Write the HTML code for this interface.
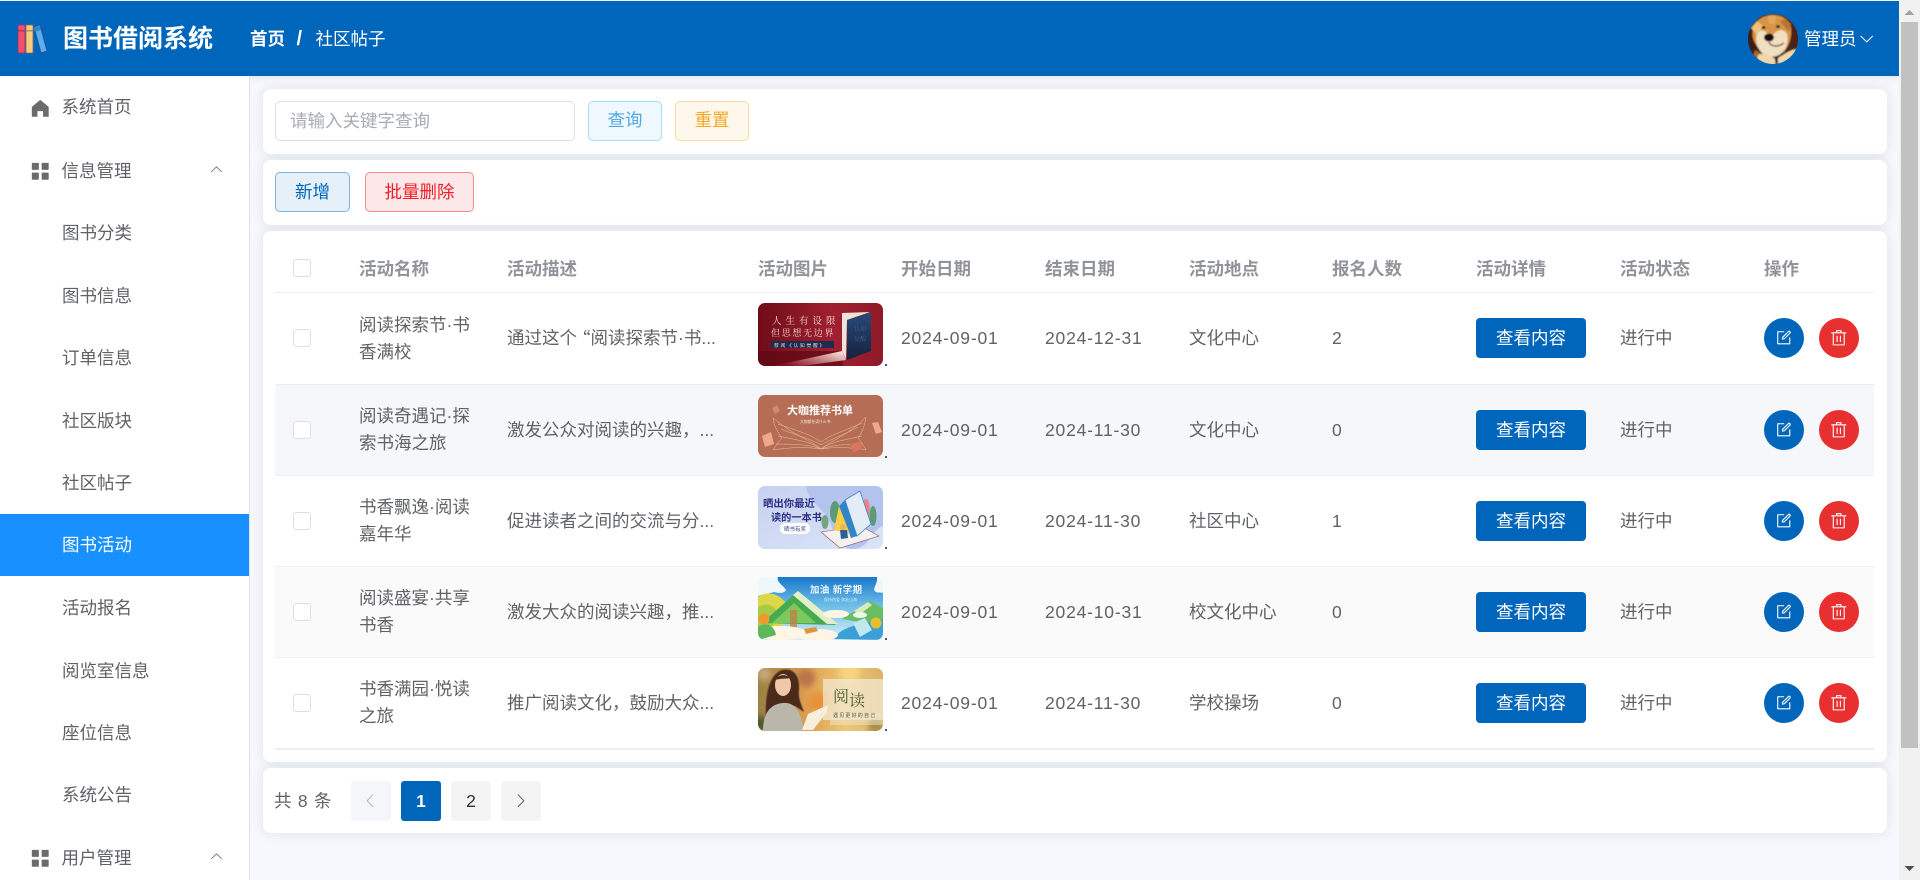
<!DOCTYPE html>
<html lang="zh-CN"><head><meta charset="utf-8"><title>社区帖子</title>
<style>
*{box-sizing:border-box;margin:0;padding:0}
html,body{width:1920px;height:880px;overflow:hidden;background:#f6f8fd}
body{position:relative;font-family:"Liberation Sans","Noto Sans CJK SC",sans-serif;font-size:17.5px;color:#606266}
.a{position:absolute}
.hdr{left:0;top:1px;width:1899px;height:75px;background:#0066bb;color:#fff;box-shadow:0 2px 6px rgba(0,0,50,.08)}
.side{left:0;top:76px;width:250px;height:804px;background:#fff;border-right:1px solid #dfe3ee}
.mi{position:absolute;left:62px;height:30px;line-height:30px;white-space:nowrap}
.card{position:absolute;left:263px;width:1624px;background:#fff;border-radius:8px;box-shadow:0 0 12px rgba(30,30,70,.1)}
.btn{position:absolute;height:40px;line-height:38px;text-align:center;border-radius:5px;border:1px solid;white-space:nowrap}
.th{position:absolute;top:254px;height:30px;line-height:30px;font-weight:700;color:#909399;white-space:nowrap}
.row{position:absolute;left:275px;width:1599px;border-bottom:1px solid #ebeef5}
.c{position:absolute;top:0;height:90px;display:flex;align-items:center;white-space:nowrap;line-height:27px}
.d{letter-spacing:.8px}
.cb{position:absolute;left:18px;top:36px;width:18px;height:18px;background:#fff;border:1px solid #dcdfe6;border-radius:3px}
.im{position:absolute;left:483px;top:10px;width:125px;height:63px;border-radius:7px;overflow:hidden}
.im svg{display:block;filter:blur(.3px)}
.dot{position:absolute;left:610px;top:71px;width:2px;height:2px;background:#555}
.see{position:absolute;left:1201px;top:25px;width:110px;height:40px;line-height:40px;text-align:center;background:#0066bb;color:#fff;border-radius:4px}
.cir{position:absolute;top:25px;width:40px;height:40px;border-radius:50%;display:flex;align-items:center;justify-content:center;color:#fff}
.pg{position:absolute;top:781px;width:40px;height:40px;line-height:40px;text-align:center;background:#f4f4f5;border-radius:3px;color:#303133}
svg.i{fill:currentColor;display:block}
</style></head><body>

<div class="a hdr"></div>
<svg class="a" style="left:15px;top:22px" width="34" height="34" viewBox="0 0 34 34">
<rect x="3" y="3" width="7" height="28" rx="1" fill="#f4506c" stroke="#8a3a70" stroke-width=".8"/><rect x="3" y="8" width="7" height="1.5" fill="#a83a60"/>
<rect x="11" y="3" width="7" height="28" rx="1" fill="#f8cc78" stroke="#8a6a60" stroke-width=".8"/><rect x="11" y="8" width="7" height="1.5" fill="#b58860"/>
<path d="M19 5l6-2 7 26-6 2z" fill="#5aaeee" stroke="#2a4f9a" stroke-width=".9"/><path d="M20 10l6-2-1.5-4-6 2z" fill="#2f86c8"/>
</svg>
<div class="a" style="left:63px;top:22px;font-size:25px;font-weight:700;color:#fff;line-height:34px;white-space:nowrap">图书借阅系统</div>
<div class="a" style="left:250px;top:24px;font-weight:700;color:#fff;line-height:30px;white-space:nowrap">首页</div>
<div class="a" style="left:296.5px;top:24px;font-weight:700;font-size:20px;color:#fff;line-height:30px">/</div>
<div class="a" style="left:315.5px;top:24px;color:#fff;line-height:30px;white-space:nowrap">社区帖子</div>

<svg class="a" style="left:1748px;top:14px" width="50" height="50" viewBox="0 0 50 50">
<defs><clipPath id="av"><circle cx="25" cy="25" r="25"/></clipPath><filter id="avb" x="-10%" y="-10%" width="120%" height="120%"><feGaussianBlur stdDeviation=".75"/></filter></defs>
<g clip-path="url(#av)"><g filter="url(#avb)">
<rect x="-3" y="-3" width="56" height="56" fill="#3a1c12"/>
<path d="M38 6l14 6v28l-11 2z" fill="#4c2416"/>
<path d="M5 16C7 6 15 1 25 1c10 0 17 5 18 13 1 9-2 18-7 24H14C8 32 3 25 5 16z" fill="#d99545"/>
<path d="M3 14l6-7 6 5-5 10z" fill="#efc080"/><path d="M43 10l-6-6-5 4 9 10z" fill="#b87530"/>
<path d="M20 2c3-1 6-1 8 0l-1 8h-6z" fill="#e3a860"/>
<path d="M9 20c3-4 7-5 10-1 2 2 6 2 8 0 4-4 9-4 12 1 2 8-1 17-8 21-6 3-13 2-17-2-5-5-7-12-5-19z" fill="#f1dfc1"/>
<ellipse cx="15.5" cy="13.5" rx="2" ry="1.4" fill="#1e120e"/><ellipse cx="30" cy="12.5" rx="2" ry="1.4" fill="#1e120e"/>
<ellipse cx="21" cy="23.5" rx="5" ry="4" fill="#15100e"/>
<path d="M21 28c1 4 8 6 15 1" fill="none" stroke="#4a3020" stroke-width="1.2"/>
<path d="M7 36l7 4-4 12H2z" fill="#a8682a"/>
<path d="M10 41c5-2 12-1 17 4l1 8H8zM30 44c5-3 11-8 19-9l4 18H30z" fill="#f0d6aa"/>
</g></g></svg>
<div class="a" style="left:1804px;top:24px;color:#fff;line-height:30px;white-space:nowrap">管理员</div>
<svg class="a i" style="left:1858px;top:30px;color:#fff" width="17.5" height="17.5" viewBox="0 0 1024 1024"><path d="M831.872 340.864 512 652.672 192.128 340.864a30.592 30.592 0 0 0-42.752 0 29.12 29.12 0 0 0 0 41.6L489.664 714.24a32 32 0 0 0 44.672 0l340.288-331.712a29.12 29.12 0 0 0 0-41.728 30.592 30.592 0 0 0-42.752 0z"/></svg>

<div class="a side"></div>
<svg class="a i" style="left:29px;top:96.5px;color:#6b6b6b" width="22.5" height="22.5" viewBox="0 0 1024 1024"><path d="M512 128 128 447.936V896h255.936V640H640v256h255.936V447.936z"/></svg>
<div class="mi" style="top:92px;left:61.5px">系统首页</div>
<svg class="a i" style="left:29px;top:159.5px;color:#6b6b6b" width="22.5" height="22.5" viewBox="0 0 1024 1024"><path d="M160 448a32 32 0 0 1-32-32V160.064a32 32 0 0 1 32-32h256a32 32 0 0 1 32 32V416a32 32 0 0 1-32 32zm448 0a32 32 0 0 1-32-32V160.064a32 32 0 0 1 32-32h255.936a32 32 0 0 1 32 32V416a32 32 0 0 1-32 32zM160 896a32 32 0 0 1-32-32V608a32 32 0 0 1 32-32h256a32 32 0 0 1 32 32v256a32 32 0 0 1-32 32zm448 0a32 32 0 0 1-32-32V608a32 32 0 0 1 32-32h255.936a32 32 0 0 1 32 32v256a32 32 0 0 1-32 32z"/></svg>
<div class="mi" style="top:156px;left:61.5px">信息管理</div>
<svg class="a i" style="left:209px;top:162px;color:#777;transform:rotate(180deg)" width="15" height="15" viewBox="0 0 1024 1024"><path d="M831.872 340.864 512 652.672 192.128 340.864a30.592 30.592 0 0 0-42.752 0 29.12 29.12 0 0 0 0 41.6L489.664 714.24a32 32 0 0 0 44.672 0l340.288-331.712a29.12 29.12 0 0 0 0-41.728 30.592 30.592 0 0 0-42.752 0z"/></svg>
<div class="mi" style="top:218px;left:62px">图书分类</div>
<div class="mi" style="top:281px;left:62px">图书信息</div>
<div class="mi" style="top:343px;left:62px">订单信息</div>
<div class="mi" style="top:406px;left:62px">社区版块</div>
<div class="mi" style="top:468px;left:62px">社区帖子</div>
<div class="a" style="left:0;top:514px;width:249px;height:62px;background:#1890ff"></div>
<div class="mi" style="top:530px;left:62px;color:#fff">图书活动</div>
<div class="mi" style="top:593px;left:62px">活动报名</div>
<div class="mi" style="top:656px;left:62px">阅览室信息</div>
<div class="mi" style="top:718px;left:62px">座位信息</div>
<div class="mi" style="top:780px;left:62px">系统公告</div>
<svg class="a i" style="left:29px;top:847px;color:#6b6b6b" width="22.5" height="22.5" viewBox="0 0 1024 1024"><path d="M160 448a32 32 0 0 1-32-32V160.064a32 32 0 0 1 32-32h256a32 32 0 0 1 32 32V416a32 32 0 0 1-32 32zm448 0a32 32 0 0 1-32-32V160.064a32 32 0 0 1 32-32h255.936a32 32 0 0 1 32 32V416a32 32 0 0 1-32 32zM160 896a32 32 0 0 1-32-32V608a32 32 0 0 1 32-32h256a32 32 0 0 1 32 32v256a32 32 0 0 1-32 32zm448 0a32 32 0 0 1-32-32V608a32 32 0 0 1 32-32h255.936a32 32 0 0 1 32 32v256a32 32 0 0 1-32 32z"/></svg>
<div class="mi" style="top:843px;left:61.5px">用户管理</div>
<svg class="a i" style="left:209px;top:849px;color:#777;transform:rotate(180deg)" width="15" height="15" viewBox="0 0 1024 1024"><path d="M831.872 340.864 512 652.672 192.128 340.864a30.592 30.592 0 0 0-42.752 0 29.12 29.12 0 0 0 0 41.6L489.664 714.24a32 32 0 0 0 44.672 0l340.288-331.712a29.12 29.12 0 0 0 0-41.728 30.592 30.592 0 0 0-42.752 0z"/></svg>

<div class="card" style="top:89px;height:65px"></div>
<div class="a" style="left:275px;top:101px;width:300px;height:40px;border:1px solid #dcdfe6;border-radius:5px;background:#fff;line-height:38px;padding-left:14px;color:#a8abb2">请输入关键字查询</div>
<div class="btn" style="left:588px;top:101px;width:74px;background:#eff8fe;border-color:#a6dcf5;color:#4fa8e0;line-height:37px">查询</div>
<div class="btn" style="left:675px;top:101px;width:74px;background:#fef7ec;border-color:#fbd99c;color:#f5a623;line-height:37px">重置</div>

<div class="card" style="top:160px;height:65px"></div>
<div class="btn" style="left:275px;top:172px;width:75px;background:#e5f0f9;border-color:#80b3dd;color:#0066bb">新增</div>
<div class="btn" style="left:365px;top:172px;width:109px;background:#fde8e9;border-color:#f58a8f;color:#ee1c25">批量删除</div>

<div class="card" style="top:231px;height:531px"></div>
<div class="a" style="left:293px;top:259px;width:18px;height:18px;background:#fff;border:1px solid #dcdfe6;border-radius:3px"></div>
<div class="th" style="left:359px">活动名称</div>
<div class="th" style="left:507px">活动描述</div>
<div class="th" style="left:758px">活动图片</div>
<div class="th" style="left:901px">开始日期</div>
<div class="th" style="left:1045px">结束日期</div>
<div class="th" style="left:1189px">活动地点</div>
<div class="th" style="left:1332px">报名人数</div>
<div class="th" style="left:1476px">活动详情</div>
<div class="th" style="left:1620px">活动状态</div>
<div class="th" style="left:1764px">操作</div>
<div class="a" style="left:275px;top:292px;width:1599px;height:1px;background:#ebeef5"></div>

<!-- row 1 -->
<div class="row" style="top:293px;height:92px;background:#fff">
<div class="cb"></div>
<div class="c" style="left:84px;top:1px">阅读探索节·书<br>香满校</div>
<div class="c" style="left:232px">通过这个<span style="font-family:'Noto Sans CJK SC',sans-serif;margin-left:-4px">“</span>阅读探索节·书...</div>
<div class="im"><svg width="125" height="63" viewBox="0 0 125 63">
<defs><linearGradient id="r1" x1="0" x2="1" y1="0" y2="0"><stop offset="0" stop-color="#6f0c18"/><stop offset=".6" stop-color="#a02030"/><stop offset="1" stop-color="#8f1a28"/></linearGradient><linearGradient id="r1b" x1="1" x2="0" y1="0" y2=".6"><stop offset="0" stop-color="#fff0e6"/><stop offset="1" stop-color="#8a1220"/></linearGradient><linearGradient id="r1c" x1="0" x2="0" y1="0" y2="1"><stop offset="0" stop-color="#2a4a78"/><stop offset="1" stop-color="#14203e"/></linearGradient></defs>
<rect width="125" height="63" fill="url(#r1)"/>
<path d="M0 48h85v15H0z" fill="#5e0812" opacity=".7"/>
<path d="M84 48 L88 57 L44 63 L15 63z" fill="url(#r1b)"/>
<path d="M84 10 L112 9 L89 17 L88 56 L84 48z" fill="#f3e2d8"/>
<path d="M89 17 L113 9 L113 48 L89 57z" fill="url(#r1c)"/>
<text x="14" y="21" font-size="9.5" fill="#f2d6cf" letter-spacing="4" font-family="Noto Serif CJK SC,serif">人生有设限</text>
<text x="13" y="33" font-size="9" fill="#f2d6cf" letter-spacing="1.7" font-family="Noto Serif CJK SC,serif">但思想无边界</text>
<rect x="13" y="38" width="63" height="7" fill="#1f2a50"/>
<text x="16" y="44" font-size="4.8" fill="#e8dcd0" letter-spacing="1.7">荐阅《认知觉醒》</text>
<text x="96" y="28" font-size="6" fill="#3f5f8e" font-family="Noto Serif CJK SC,serif">认知</text>
<text x="96" y="38" font-size="6" fill="#3f5f8e" font-family="Noto Serif CJK SC,serif">觉醒</text>
</svg></div><div class="dot"></div>
<div class="c d" style="left:626px">2024-09-01</div>
<div class="c d" style="left:770px">2024-12-31</div>
<div class="c" style="left:914px">文化中心</div>
<div class="c" style="left:1057px">2</div>
<div class="see">查看内容</div>
<div class="c" style="left:1345px">进行中</div>
<div class="cir" style="left:1489px;background:#0066bb"><svg class="i" width="17.5" height="17.5" viewBox="0 0 1024 1024"><path d="M832 512a32 32 0 1 1 64 0v352a32 32 0 0 1-32 32H160a32 32 0 0 1-32-32V160a32 32 0 0 1 32-32h352a32 32 0 0 1 0 64H192v640h640z"/><path d="m469.952 554.24 52.8-7.552L847.104 222.4a32 32 0 1 0-45.248-45.248L477.44 501.44l-7.552 52.8zm422.4-422.4a96 96 0 0 1 0 135.808l-331.84 331.84a32 32 0 0 1-18.112 9.088L436.8 623.68a32 32 0 0 1-36.224-36.224l15.104-105.6a32 32 0 0 1 9.024-18.112l331.904-331.84a96 96 0 0 1 135.744 0z"/></svg></div>
<div class="cir" style="left:1544px;background:#e83030"><svg class="i" width="17.5" height="17.5" viewBox="0 0 1024 1024"><path d="M160 256H96a32 32 0 0 1 0-64h256V95.936a32 32 0 0 1 32-31.936h256a32 32 0 0 1 32 31.936V192h256a32 32 0 1 1 0 64h-64v672a32 32 0 0 1-32 32H192a32 32 0 0 1-32-32zm448-64v-64H416v64zM224 896h576V256H224zm192-128a32 32 0 0 1-32-32V416a32 32 0 0 1 64 0v320a32 32 0 0 1-32 32m192 0a32 32 0 0 1-32-32V416a32 32 0 0 1 64 0v320a32 32 0 0 1-32 32"/></svg></div>
</div>

<!-- row 2 -->
<div class="row" style="top:385px;height:91px;background:#f5f7fa">
<div class="cb"></div>
<div class="c" style="left:84px">阅读奇遇记·探<br>索书海之旅</div>
<div class="c" style="left:232px">激发公众对阅读的兴趣，...</div>
<div class="im" style="height:62px"><svg width="125" height="62" viewBox="0 0 125 62">
<rect width="125" height="62" fill="#b56e55"/>
<text x="29" y="19" font-size="11" font-weight="700" fill="#fff">大咖推荐书单</text>
<text x="42" y="28" font-size="3.8" fill="#f6e2d4">大咖都在读什么书</text>
<g fill="none" stroke="#eec29c" stroke-width=".5">
<path d="M63 54C54 46 38 42 15 23c1 8 5 15 9 20-3 3-5 6-9 12 17-3 36-3 48-1z"/>
<path d="M63 54C72 46 88 42 108 22c-1 8-4 16-8 21 3 3 5 7 8 12-16-3-33-3-45-1z"/>
<path d="M63 54C53 47 40 45 20 41M63 50C53 44 40 41 23 34M63 54C53 50 40 49 18 49M63 47C54 40 40 36 20 29M63 54C73 47 86 45 104 41M63 50C73 44 86 40 100 32M63 54C74 50 88 49 105 49M63 47C72 40 86 36 104 28"/>
</g>
<path d="M14 13l5-3 3 6-5 3z" fill="#d08a6e"/><path d="M4 41l9-4 3 12-9 3z" fill="#eea98a"/><path d="M114 28l6-1 4 10-6 2z" fill="#eea98a"/><path d="M92 49l11-3 2 8-10 3z" fill="#d8765a"/>
</svg></div><div class="dot"></div>
<div class="c d" style="left:626px">2024-09-01</div>
<div class="c d" style="left:770px">2024-11-30</div>
<div class="c" style="left:914px">文化中心</div>
<div class="c" style="left:1057px">0</div>
<div class="see">查看内容</div>
<div class="c" style="left:1345px">进行中</div>
<div class="cir" style="left:1489px;background:#0066bb"><svg class="i" width="17.5" height="17.5" viewBox="0 0 1024 1024"><path d="M832 512a32 32 0 1 1 64 0v352a32 32 0 0 1-32 32H160a32 32 0 0 1-32-32V160a32 32 0 0 1 32-32h352a32 32 0 0 1 0 64H192v640h640z"/><path d="m469.952 554.24 52.8-7.552L847.104 222.4a32 32 0 1 0-45.248-45.248L477.44 501.44l-7.552 52.8zm422.4-422.4a96 96 0 0 1 0 135.808l-331.84 331.84a32 32 0 0 1-18.112 9.088L436.8 623.68a32 32 0 0 1-36.224-36.224l15.104-105.6a32 32 0 0 1 9.024-18.112l331.904-331.84a96 96 0 0 1 135.744 0z"/></svg></div>
<div class="cir" style="left:1544px;background:#e83030"><svg class="i" width="17.5" height="17.5" viewBox="0 0 1024 1024"><path d="M160 256H96a32 32 0 0 1 0-64h256V95.936a32 32 0 0 1 32-31.936h256a32 32 0 0 1 32 31.936V192h256a32 32 0 1 1 0 64h-64v672a32 32 0 0 1-32 32H192a32 32 0 0 1-32-32zm448-64v-64H416v64zM224 896h576V256H224zm192-128a32 32 0 0 1-32-32V416a32 32 0 0 1 64 0v320a32 32 0 0 1-32 32m192 0a32 32 0 0 1-32-32V416a32 32 0 0 1 64 0v320a32 32 0 0 1-32 32"/></svg></div>
</div>

<!-- row 3 -->
<div class="row" style="top:476px;height:91px;background:#fff">
<div class="cb"></div>
<div class="c" style="left:84px">书香飘逸·阅读<br>嘉年华</div>
<div class="c" style="left:232px">促进读者之间的交流与分...</div>
<div class="im"><svg width="125" height="63" viewBox="0 0 125 63">
<defs><linearGradient id="r3" x1="0" x2="1" y1="0" y2="1"><stop offset="0" stop-color="#c6d2f0"/><stop offset="1" stop-color="#dbe4f8"/></linearGradient></defs>
<rect width="125" height="63" fill="url(#r3)"/>
<path d="M48 0h77v40c-12 4-14 23-30 23-14 0-18-13-22-24C68 22 50 18 48 0z" fill="#b4c3ee"/>
<text x="5" y="21" font-size="10.4" font-weight="700" fill="#2c2f86">晒出你最近</text>
<text x="13" y="35" font-size="10.2" font-weight="700" fill="#2c2f86">读的一本书</text>
<rect x="22" y="37" width="30" height="11" rx="5.5" fill="#fff"/>
<text x="26" y="45" font-size="5.5" fill="#3a3f88">晒书有奖</text>
<ellipse cx="77" cy="26" rx="5" ry="11" fill="#5d9a78"/><ellipse cx="67" cy="36" rx="3.5" ry="7" fill="#74a67a"/><ellipse cx="108" cy="23" rx="3.8" ry="10" fill="#f17f88"/><ellipse cx="115" cy="30" rx="3.5" ry="10" fill="#5e9a74"/>
<path d="M63 46 L103 40 L121 50 L82 62z" fill="#f5f1ee" stroke="#8a5060" stroke-width=".6"/>
<path d="M87 14 L102 5 L113 38 L99 50z" fill="#e4ecf8" stroke="#3a86c8" stroke-width=".8"/>
<path d="M87 14 L99 50 L93 52 L81 20z" fill="#2e86c8"/>
<path d="M81 20 L92 48 L76 44z" fill="#f6cf44"/>
<circle cx="85" cy="41" r="3" fill="#f0b060"/><path d="M82 44h7l1 8-7 1z" fill="#2e5f9a"/>
</svg></div><div class="dot"></div>
<div class="c d" style="left:626px">2024-09-01</div>
<div class="c d" style="left:770px">2024-11-30</div>
<div class="c" style="left:914px">社区中心</div>
<div class="c" style="left:1057px">1</div>
<div class="see">查看内容</div>
<div class="c" style="left:1345px">进行中</div>
<div class="cir" style="left:1489px;background:#0066bb"><svg class="i" width="17.5" height="17.5" viewBox="0 0 1024 1024"><path d="M832 512a32 32 0 1 1 64 0v352a32 32 0 0 1-32 32H160a32 32 0 0 1-32-32V160a32 32 0 0 1 32-32h352a32 32 0 0 1 0 64H192v640h640z"/><path d="m469.952 554.24 52.8-7.552L847.104 222.4a32 32 0 1 0-45.248-45.248L477.44 501.44l-7.552 52.8zm422.4-422.4a96 96 0 0 1 0 135.808l-331.84 331.84a32 32 0 0 1-18.112 9.088L436.8 623.68a32 32 0 0 1-36.224-36.224l15.104-105.6a32 32 0 0 1 9.024-18.112l331.904-331.84a96 96 0 0 1 135.744 0z"/></svg></div>
<div class="cir" style="left:1544px;background:#e83030"><svg class="i" width="17.5" height="17.5" viewBox="0 0 1024 1024"><path d="M160 256H96a32 32 0 0 1 0-64h256V95.936a32 32 0 0 1 32-31.936h256a32 32 0 0 1 32 31.936V192h256a32 32 0 1 1 0 64h-64v672a32 32 0 0 1-32 32H192a32 32 0 0 1-32-32zm448-64v-64H416v64zM224 896h576V256H224zm192-128a32 32 0 0 1-32-32V416a32 32 0 0 1 64 0v320a32 32 0 0 1-32 32m192 0a32 32 0 0 1-32-32V416a32 32 0 0 1 64 0v320a32 32 0 0 1-32 32"/></svg></div>
</div>

<!-- row 4 -->
<div class="row" style="top:567px;height:91px;background:#fafafa">
<div class="cb"></div>
<div class="c" style="left:84px">阅读盛宴·共享<br>书香</div>
<div class="c" style="left:232px">激发大众的阅读兴趣，推...</div>
<div class="im"><svg width="125" height="63" viewBox="0 0 125 63">
<defs><linearGradient id="r4" x1="0" x2="0" y1="0" y2="1"><stop offset="0" stop-color="#1a78cc"/><stop offset=".45" stop-color="#6cbde8"/><stop offset="1" stop-color="#d8f0f6"/></linearGradient></defs>
<rect width="125" height="63" fill="url(#r4)"/>
<path d="M0 0h20c-2 5 5 8 8 13-2 4-8 3-12 2-6 2-11 2-16 4zM125 0h-6c1 8-6 12-1 15 2 1 5 0 7 1z" fill="#eef8fc"/>
<path d="M0 20c9-7 22-4 30 9l-8 24H0z" fill="#dcd84a"/>
<path d="M0 30c8-5 16-2 20 6l-6 14H0z" fill="#aacb48"/>
<path d="M4 46L40 14 78 48z" fill="#46aa50"/>
<path d="M35 18L40 14 80 47H69z" fill="#e2f0c8"/>
<path d="M14 46L36 26 58 46z" fill="#7ec860"/>
<path d="M84 42l28-18 13 7v18z" fill="#6abc62"/>
<path d="M96 34l14-9 4 3-13 10z" fill="#d8ecb8"/>
<path d="M76 62c4-8 14-12 26-15l23-5v21z" fill="#3d9fd8"/>
<path d="M95 46l12-5 7 12-12 7z" fill="#bfe8f0"/>
<rect x="32" y="33" width="7" height="20" fill="#c08048" opacity=".8"/>
<ellipse cx="22" cy="56" rx="27" ry="7" fill="#fff5e4"/><ellipse cx="60" cy="58" rx="20" ry="6" fill="#fff5e4"/><ellipse cx="78" cy="37" rx="13" ry="4" fill="#fff5e4"/><ellipse cx="102" cy="38" rx="7" ry="3" fill="#eef6ea"/>
<path d="M0 50c6-5 16-3 18 8l-18 5z" fill="#5cb85c"/>
<circle cx="6" cy="42" r="5.5" fill="#f2992c"/><circle cx="118" cy="46" r="5.5" fill="#e6bf2c"/>
<path d="M46 52l12-2 2 4-12 3z" fill="#dd9340"/>
<text x="52" y="16" font-size="9.4" font-weight="700" fill="#f0f8ff" letter-spacing=".5">加油 新学期</text>
<text x="66" y="24" font-size="4" fill="#d5ecfa">保持热爱 奔赴山海</text>
</svg></div><div class="dot"></div>
<div class="c d" style="left:626px">2024-09-01</div>
<div class="c d" style="left:770px">2024-10-31</div>
<div class="c" style="left:914px">校文化中心</div>
<div class="c" style="left:1057px">0</div>
<div class="see">查看内容</div>
<div class="c" style="left:1345px">进行中</div>
<div class="cir" style="left:1489px;background:#0066bb"><svg class="i" width="17.5" height="17.5" viewBox="0 0 1024 1024"><path d="M832 512a32 32 0 1 1 64 0v352a32 32 0 0 1-32 32H160a32 32 0 0 1-32-32V160a32 32 0 0 1 32-32h352a32 32 0 0 1 0 64H192v640h640z"/><path d="m469.952 554.24 52.8-7.552L847.104 222.4a32 32 0 1 0-45.248-45.248L477.44 501.44l-7.552 52.8zm422.4-422.4a96 96 0 0 1 0 135.808l-331.84 331.84a32 32 0 0 1-18.112 9.088L436.8 623.68a32 32 0 0 1-36.224-36.224l15.104-105.6a32 32 0 0 1 9.024-18.112l331.904-331.84a96 96 0 0 1 135.744 0z"/></svg></div>
<div class="cir" style="left:1544px;background:#e83030"><svg class="i" width="17.5" height="17.5" viewBox="0 0 1024 1024"><path d="M160 256H96a32 32 0 0 1 0-64h256V95.936a32 32 0 0 1 32-31.936h256a32 32 0 0 1 32 31.936V192h256a32 32 0 1 1 0 64h-64v672a32 32 0 0 1-32 32H192a32 32 0 0 1-32-32zm448-64v-64H416v64zM224 896h576V256H224zm192-128a32 32 0 0 1-32-32V416a32 32 0 0 1 64 0v320a32 32 0 0 1-32 32m192 0a32 32 0 0 1-32-32V416a32 32 0 0 1 64 0v320a32 32 0 0 1-32 32"/></svg></div>
</div>

<!-- row 5 -->
<div class="row" style="top:658px;height:91px;background:#fff">
<div class="cb"></div>
<div class="c" style="left:84px">书香满园·悦读<br>之旅</div>
<div class="c" style="left:232px">推广阅读文化，鼓励大众...</div>
<div class="im"><svg width="125" height="63" viewBox="0 0 125 63">
<defs><linearGradient id="r5" x1="0" x2="1" y1="0" y2="0"><stop offset="0" stop-color="#9a8044"/><stop offset=".4" stop-color="#dda050"/><stop offset=".7" stop-color="#ecc878"/><stop offset="1" stop-color="#d9b26a"/></linearGradient><filter id="b5"><feGaussianBlur stdDeviation="3"/></filter><filter id="b5s"><feGaussianBlur stdDeviation=".4"/></filter></defs>
<rect width="125" height="63" fill="url(#r5)"/>
<g filter="url(#b5)"><circle cx="48" cy="10" r="9" fill="#b9744a"/><circle cx="60" cy="34" r="10" fill="#e8923a"/><circle cx="92" cy="4" r="10" fill="#f6d480"/><circle cx="2" cy="56" r="8" fill="#4e5a2e"/><circle cx="118" cy="58" r="8" fill="#a88e4c"/><circle cx="6" cy="6" r="7" fill="#c8a878"/></g>
<rect x="65" y="11" width="60" height="41" fill="#f4eedb" opacity=".68"/>
<rect x="72" y="45" width="53" height="12" fill="#efe6cc" opacity=".5"/>
<path d="M8 50C7 34 9 7 24 2c13-3 18 8 17 20-1 8 2 14 5 22l-9-6-13 2z" fill="#4c2c1a" filter="url(#b5s)"/>
<ellipse cx="25" cy="17" rx="8" ry="11" fill="#f0c8a8"/>
<path d="M17 12c2-5 10-7 15-2-3 1-8 0-15 2z" fill="#4c2c1a"/>
<path d="M5 63c0-16 6-27 20-28 13-1 18 10 21 28z" fill="#bab6aa"/>
<path d="M44 62l6-16 20-9-1 7-14 18z" fill="#f6efdc"/>
<text x="75" y="34" font-size="16" fill="#4a5a30" font-family="Noto Serif CJK SC,serif">阅</text>
<text x="91" y="38" font-size="16" fill="#4a5a30" font-family="Noto Serif CJK SC,serif">读</text>
<text x="75" y="49" font-size="5" fill="#5a5a38" letter-spacing="1.2">遇见更好的自己</text>
</svg></div><div class="dot"></div>
<div class="c d" style="left:626px">2024-09-01</div>
<div class="c d" style="left:770px">2024-11-30</div>
<div class="c" style="left:914px">学校操场</div>
<div class="c" style="left:1057px">0</div>
<div class="see">查看内容</div>
<div class="c" style="left:1345px">进行中</div>
<div class="cir" style="left:1489px;background:#0066bb"><svg class="i" width="17.5" height="17.5" viewBox="0 0 1024 1024"><path d="M832 512a32 32 0 1 1 64 0v352a32 32 0 0 1-32 32H160a32 32 0 0 1-32-32V160a32 32 0 0 1 32-32h352a32 32 0 0 1 0 64H192v640h640z"/><path d="m469.952 554.24 52.8-7.552L847.104 222.4a32 32 0 1 0-45.248-45.248L477.44 501.44l-7.552 52.8zm422.4-422.4a96 96 0 0 1 0 135.808l-331.84 331.84a32 32 0 0 1-18.112 9.088L436.8 623.68a32 32 0 0 1-36.224-36.224l15.104-105.6a32 32 0 0 1 9.024-18.112l331.904-331.84a96 96 0 0 1 135.744 0z"/></svg></div>
<div class="cir" style="left:1544px;background:#e83030"><svg class="i" width="17.5" height="17.5" viewBox="0 0 1024 1024"><path d="M160 256H96a32 32 0 0 1 0-64h256V95.936a32 32 0 0 1 32-31.936h256a32 32 0 0 1 32 31.936V192h256a32 32 0 1 1 0 64h-64v672a32 32 0 0 1-32 32H192a32 32 0 0 1-32-32zm448-64v-64H416v64zM224 896h576V256H224zm192-128a32 32 0 0 1-32-32V416a32 32 0 0 1 64 0v320a32 32 0 0 1-32 32m192 0a32 32 0 0 1-32-32V416a32 32 0 0 1 64 0v320a32 32 0 0 1-32 32"/></svg></div>
</div>
<div class="a" style="left:275px;top:748px;width:1599px;height:2px;background:#ebeef5"></div>

<div class="card" style="top:768px;height:65px"></div>
<div class="a" style="left:274px;top:786px;line-height:30px;white-space:nowrap;word-spacing:1.5px">共 8 条</div>
<div class="pg" style="left:351px;background:#f5f6f9;color:#b4b6bc"><svg class="i" style="margin:11px" width="17.5" height="17.5" viewBox="0 0 1024 1024"><path d="M609.408 149.376 277.76 489.6a32 32 0 0 0 0 44.672l331.648 340.352a29.12 29.12 0 0 0 41.728 0 30.592 30.592 0 0 0 0-42.752L339.264 511.936l311.872-319.872a30.592 30.592 0 0 0 0-42.688 29.12 29.12 0 0 0-41.728 0z"/></svg></div>
<div class="pg" style="left:401px;background:#0066bb;color:#fff;font-weight:700">1</div>
<div class="pg" style="left:451px">2</div>
<div class="pg" style="left:501px;color:#606266"><svg class="i" style="margin:11px" width="17.5" height="17.5" viewBox="0 0 1024 1024"><path d="M340.864 149.312a30.592 30.592 0 0 0 0 42.752L652.736 512 340.864 831.872a30.592 30.592 0 0 0 0 42.752 29.12 29.12 0 0 0 41.728 0L714.24 534.336a32 32 0 0 0 0-44.672L382.592 149.376a29.12 29.12 0 0 0-41.728 0z"/></svg></div>

<div class="a" style="left:1899px;top:0;width:21px;height:880px;background:#f1f1f1"></div>
<div class="a" style="left:1901px;top:22px;width:17px;height:726px;background:#c1c1c1"></div>
<svg class="a" style="left:1899px;top:0" width="21" height="880" viewBox="0 0 21 880"><path d="M10.5 10l5 5h-10z" fill="#a3a3a3"/><path d="M5.5 866h10l-5 5z" fill="#505050"/></svg>

</body></html>
